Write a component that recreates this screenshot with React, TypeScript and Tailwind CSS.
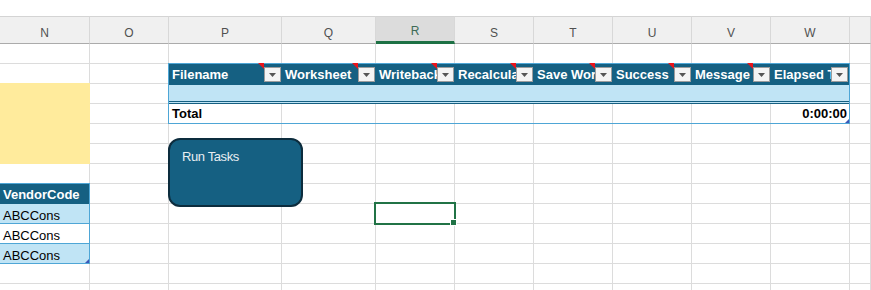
// Excel-style sheet: columns N–X, a task table, a vendor list and a "Run Tasks" shape

const COLS = ["N", "O", "P", "Q", "R", "S", "T", "U", "V", "W", ""];
const ROW_COUNT = 13;

const TASK_HEADERS: { label: string; note: boolean }[] = [
  { label: "Filename", note: true },
  { label: "Worksheet", note: true },
  { label: "Writeback", note: true },
  { label: "Recalculate", note: true },
  { label: "Save Workbook", note: true },
  { label: "Success", note: true },
  { label: "Message", note: true },
  { label: "Elapsed Time", note: false },
];

const VENDORS = ["ABCCons", "ABCCons", "ABCCons"];

function FilterButton() {
  return (
    <span className="mr-px flex h-[15px] w-[17px] shrink-0 items-center justify-center self-center border border-[#9c9c9c] bg-[#f4f4f4]">
      <svg width="7" height="4" viewBox="0 0 7 4">
        <path d="M0 0h7L3.5 4z" fill="#555" />
      </svg>
    </span>
  );
}

function ResizeHandle() {
  return (
    <svg className="absolute right-0 bottom-0" width="4" height="4" viewBox="0 0 4 4">
      <polygon points="4,0 4,4 0,4" fill="#3d56b8" />
    </svg>
  );
}

export default function App() {
  return (
    <div className="relative h-[290px] w-[871px] overflow-hidden bg-white font-['Liberation_Sans',Arial,sans-serif]">
      {/* strip above the column letters */}
      <div className="h-4" />

      {/* column letters */}
      <div className="grid grid-cols-[90px_79px_113px_94px_79px_79px_79px_79px_79px_79px_21px]">
        {COLS.map((c, i) => (
          <div
            key={i}
            className={
              "flex h-[28px] items-end justify-center border-t border-r border-t-[#d4d4d4] border-r-[#d8d8d8] pb-[4px] text-[12px] leading-none " +
              (c === "R"
                ? "border-b-[3px] border-b-[#1e7145] bg-[#dcdcdc] text-[#3d6b57]"
                : "border-b border-b-[#ababab] bg-[#f0f0f0] text-[#505050]")
            }
          >
            {c}
          </div>
        ))}
      </div>

      {/* sheet body */}
      <div className="relative">
        <div className="grid grid-cols-[90px_79px_113px_94px_79px_79px_79px_79px_79px_79px_21px] grid-rows-[repeat(13,20px)]">
          {Array.from({ length: ROW_COUNT * COLS.length }).map((_, i) => (
            <div key={i} className="border-r border-b border-[#dcdcdc]" />
          ))}
        </div>

        {/* content lying over the gridlines */}
        <div className="absolute inset-0 grid grid-cols-[90px_79px_113px_94px_79px_79px_79px_79px_79px_79px_21px] grid-rows-[repeat(13,20px)]">
          {/* yellow block */}
          <div className="col-start-1 row-span-4 row-start-3 -mt-px bg-[#ffeb9c]" />

          {/* task table */}
          <div className="relative col-span-8 col-start-3 row-span-3 row-start-2 -mt-px -ml-px flex min-w-0 flex-col border border-[#4ea6d6]">
            <div className="grid grid-cols-[113px_94px_79px_79px_79px_79px_79px_minmax(0,1fr)]">
              {TASK_HEADERS.map((h) => (
                <div key={h.label} className="relative flex h-[21px] min-w-0 items-end bg-[#156082]">
                  <span className="min-w-0 flex-1 overflow-hidden whitespace-nowrap pb-[4px] pl-[3px] text-[13px] leading-none font-bold text-white">
                    {h.label}
                  </span>
                  <FilterButton />
                  {h.note && (
                    <svg className="absolute top-[-1px] right-[18px]" width="6" height="6" viewBox="0 0 6 6">
                      <polygon points="0,0 6,0 6,6" fill="#e8141b" />
                    </svg>
                  )}
                </div>
              ))}
            </div>
            <div className="h-[19px] border-b-[3px] border-double border-[#156082] bg-[#c0e4f5]" />
            <div className="grid h-[19px] grid-cols-[113px_94px_79px_79px_79px_79px_79px_minmax(0,1fr)]">
              <div className="flex items-end border-r border-[#dcdcdc] pb-[3px] pl-[3px] text-[13px] leading-none font-bold text-black">
                Total
              </div>
              <div className="border-r border-[#dcdcdc]" />
              <div className="border-r border-[#dcdcdc]" />
              <div className="border-r border-[#dcdcdc]" />
              <div className="border-r border-[#dcdcdc]" />
              <div className="border-r border-[#dcdcdc]" />
              <div className="border-r border-[#dcdcdc]" />
              <div className="flex items-end justify-end pr-[2px] pb-[3px] text-[13px] leading-none font-bold text-black">
                0:00:00
              </div>
            </div>
            <ResizeHandle />
          </div>

          {/* vendor list */}
          <div className="relative col-start-1 row-span-4 row-start-8 -mt-px flex flex-col border-y border-r border-[#4ea6d6]">
            <div className="flex h-[20px] items-end bg-[#156082] pb-[3px] pl-[3px] text-[13px] leading-none font-bold text-white">
              VendorCode
            </div>
            {VENDORS.map((v, i) => (
              <div
                key={i}
                className={
                  "flex items-end pl-[3px] text-[13px] leading-none text-black " +
                  (i === 0 ? "h-[20px] border-b border-[#4ea6d6] bg-[#c0e4f5] pb-[1px]" : "") +
                  (i === 1 ? "h-[20px] border-b border-[#4ea6d6] bg-white pb-[1px]" : "") +
                  (i === 2 ? "h-[19px] bg-[#c0e4f5] pb-[1px]" : "")
                }
              >
                {v}
              </div>
            ))}
            <ResizeHandle />
          </div>

          {/* active cell R9 */}
          <div className="relative col-start-5 row-start-9 -mt-[2px] -mr-px -mb-px -ml-[2px] border-2 border-[#217346]">
            <span className="absolute right-[-3px] bottom-[-3px] h-[7px] w-[7px] border border-white bg-[#217346]" />
          </div>
        </div>
      </div>

      {/* floating "Run Tasks" shape */}
      <button className="absolute top-[138px] left-[168px] flex h-[69px] w-[135px] items-start rounded-[12px] border-2 border-[#0c2c3d] bg-[#156082] pt-[10px] pl-3 text-[13px] leading-none tracking-[-0.4px] text-[#e8eef2]">
        Run Tasks
      </button>
    </div>
  );
}
